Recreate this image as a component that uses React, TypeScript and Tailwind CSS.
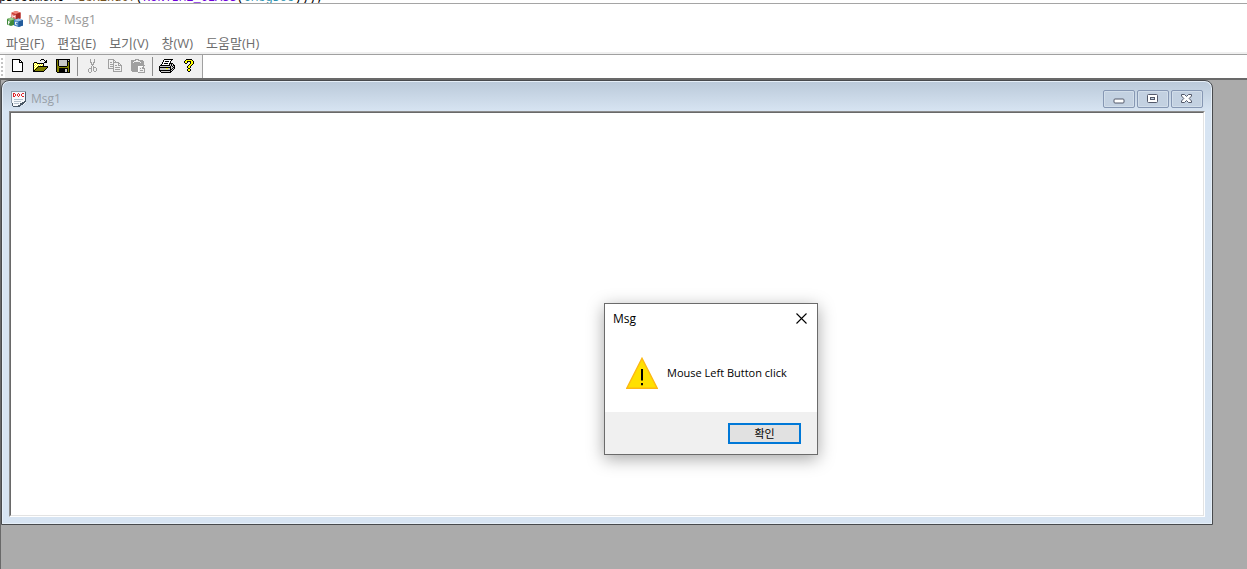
import type { ReactNode } from 'react';

const palette: Record<string, string> = {
  '#': '#000000',
  o: '#808000',
  y: '#ffff00',
  w: '#ffffff',
  g: '#a0a0a0',
  s: '#c8c8c8',
};

const newIcon = [
  '...########.....',
  '...#wwwwww##....',
  '...#wwwwww#w#...',
  '...#wwwwww####..',
  '...#wwwwwwwww#..',
  '...#wwwwwwwww#..',
  '...#wwwwwwwww#..',
  '...#wwwwwwwww#..',
  '...#wwwwwwwww#..',
  '...#wwwwwwwww#..',
  '...#wwwwwwwww#..',
  '...#wwwwwwwww#..',
  '...###########..',
];

const openIcon = [
  '.........###....',
  '........#...#.#.',
  '.............##.',
  '..###.......###.',
  '.#ywy#######....',
  '.#wywywywyw#....',
  '.#ywywywywy#....',
  '.#wywy##########',
  '.#ywy#ooooooooo#',
  '.#wy#ooooooooo#.',
  '.#y#ooooooooo#..',
  '.##ooooooooo#...',
  '.###########....',
];

const saveIcon = [
  '.##############.',
  '.#o#ssssssss#s#.',
  '.#o#ssssssss###.',
  '.#o#ssssssss#o#.',
  '.#o#ssssssss#o#.',
  '.#o#ssssssss#o#.',
  '.#o#ssssssss#o#.',
  '.#oo########oo#.',
  '.#oooooooooooo#.',
  '.#oo#########o#.',
  '.#oo######ss#o#.',
  '.#oo######ss#o#.',
  '.#oo######ss#o#.',
  '..#############.',
];

const cutIcon = [
  '......g...g.....',
  '......g...g.....',
  '......g...g.....',
  '......gg.gg.....',
  '.......g.g......',
  '.......ggg......',
  '........g.......',
  '.......g.g......',
  '.......g.ggg....',
  '.....ggg.g..g...',
  '....g..g.g..g...',
  '....g..g.g..g...',
  '....g..g..gg....',
  '.....gg.........',
];

const copyIcon = [
  '.gggggg.........',
  '.g....gg........',
  '.g....g.g.......',
  '.g.gg.gggggg....',
  '.g....g....gg...',
  '.g.gggg....g.g..',
  '.g....g.gg.gggg.',
  '.g.gggg.......g.',
  '.g....g.ggggg.g.',
  '.gggggg.......g.',
  '......g.ggggg.g.',
  '......g.......g.',
  '......ggggggggg.',
];

const pasteIcon = [
  '.....gggg.......',
  '.ggggg..ggggg...',
  '.ggg......gggg..',
  '.gg.gggggg.ggg..',
  '.ggggggggggggg..',
  '.ggggggggggggg..',
  '.gggggggggggggg.',
  '.gggggggwwwwwg..',
  '.gggggggw...gg..',
  '.gggggggw.g.ggg.',
  '.gggggggw.....g.',
  '.gggggggw.ggg.g.',
  '..ggggggw.....g.',
  '........ggggggg.',
];

const printIcon = [
  '.....#########..',
  '....#wwwwwww#...',
  '....#w####w#....',
  '...#wwwwwww#....',
  '...#w####w####..',
  '..#wwwwwww#s#s#.',
  '.##########s#s##',
  '#ssssssssss#s#s#',
  '############ss##',
  '#ssssssyyss#s#s#',
  '#ssssssssss##s#.',
  '############s#..',
  '.#sssssssss##...',
  '..##########....',
];

const helpIcon = [
  '....######......',
  '...#yyyyyy#.....',
  '..#yy####yy#....',
  '..#yy#..#yy#....',
  '...##...#yy#....',
  '.......#yy#.....',
  '......#yy#......',
  '.....#yy#.......',
  '.....#yy#.......',
  '......##........',
  '.....#yy#.......',
  '.....#yy#.......',
  '......##........',
];

function PixelIcon({ rows }: { rows: string[] }) {
  return (
    <svg width="16" height="14" viewBox="0 0 16 14" shapeRendering="crispEdges" aria-hidden="true">
      {rows.flatMap((row, y) =>
        row
          .split('')
          .map((c, x) =>
            palette[c] ? <rect key={`${x}-${y}`} x={x} y={y} width="1" height="1" fill={palette[c]} /> : null,
          ),
      )}
    </svg>
  );
}

function AppIcon() {
  return (
    <svg width="16" height="16" viewBox="0 0 16 16" aria-hidden="true">
      <path d="M4.500 1.500 9 0 13.500 1.500V7.500L9 9 4.500 7.500Z" fill="#cf3b35" />
      <path d="M4.500 1.500 9 0 13.500 1.500 9 3Z" fill="#ef8b80" />
      <path d="M9 3 13.500 1.500V7.500L9 9Z" fill="#a92925" />
      <path d="M0 8 4 6.500 8 8V13.500L4 15 0 13.500Z" fill="#3f8a3a" />
      <path d="M0 8 4 6.500 8 8 4 9.500Z" fill="#9bcb8a" />
      <path d="M7 9 11.500 7.500 16 9V14.500L11.500 16 7 14.500Z" fill="#3f7fc0" />
      <path d="M7 9 11.500 7.500 16 9 11.500 10.500Z" fill="#9cc6e8" />
      <path d="M11.500 10.500 16 9V14.500L11.500 16Z" fill="#245c9c" />
      <path
        d="M5.800 3.500v3.500M8 4v3.500M5.800 5.200 8 5.700M1.500 10v3.500M1.500 10H3.300M1.500 11.700H3M10.500 11.500 8.500 11v2.500l2 .5"
        stroke="#fff"
        strokeWidth="0.9"
        fill="none"
      />
    </svg>
  );
}

function DocIcon() {
  return (
    <svg width="16" height="16" viewBox="0 0 16 16" shapeRendering="crispEdges" aria-hidden="true">
      <path d="M1 1H15V11L12 14H10L9 15H2V13H1Z" fill="#f6f9fc" />
      <path d="M0 0H15V1H1V12H0Z" fill="#8f9cab" />
      <path d="M14 1V10H13V11H11V12H9V14H7V15H2V16H9V15H10V14H12V13H13V12H14V11H15V1ZM1 12H2V15H1Z" fill="#4a5866" />
      <path
        d="M2 2h2v1h1v2H4v1H2zM3 3v2h1V3zM7 2h1v1h1v2H8v1H7V5H6V3h1zM7 3v2h1V3zM11 2h2v1h-2zM10 3h1v2h-1zM11 5h2v1h-2z"
        fill="#e0252b"
        fillRule="evenodd"
      />
      <path d="M3 8h9v1H3zM3 10h7v1H3zM3 12h5v1H3z" fill="#b4c0cc" />
    </svg>
  );
}

const menus = ['파일(F)', '편집(E)', '보기(V)', '창(W)', '도움말(H)'];

const toolGroups = [
  [
    { label: '새로 만들기', rows: newIcon, disabled: false },
    { label: '열기', rows: openIcon, disabled: false },
    { label: '저장', rows: saveIcon, disabled: false },
  ],
  [
    { label: '잘라내기', rows: cutIcon, disabled: true },
    { label: '복사', rows: copyIcon, disabled: true },
    { label: '붙여넣기', rows: pasteIcon, disabled: true },
  ],
  [
    { label: '인쇄', rows: printIcon, disabled: false },
    { label: '정보', rows: helpIcon, disabled: false },
  ],
];

function Toolbar() {
  return (
    <div className="flex h-[23px] w-[203px] border-r border-[#a0a0a0] bg-[#f0f0f0]">
      <div className="flex w-[5px] flex-col justify-center gap-[2px] bg-white pl-px">
        {[0, 1, 2, 3, 4].map((i) => (
          <span key={i} className="size-[2px] bg-[#c4c4c4]" />
        ))}
      </div>
      {toolGroups.map((group, i) => (
        <div key={i} className="flex">
          {i > 0 && <span className="mx-[2px] my-[2px] w-[2px] border-r border-[#8c8c8c]" />}
          {group.map((tool) => (
            <button
              key={tool.label}
              type="button"
              aria-label={tool.label}
              disabled={tool.disabled}
              className="flex w-[23px] items-center justify-center pb-[2px]"
            >
              <PixelIcon rows={tool.rows} />
            </button>
          ))}
        </div>
      ))}
    </div>
  );
}

function CaptionButton({ label, children }: { label: string; children: ReactNode }) {
  return (
    <button
      type="button"
      aria-label={label}
      className="flex h-[18px] w-8 items-center justify-center rounded-xs border border-[#8697b3] bg-[#c3d1e1] inset-ring inset-ring-[#d2deea]"
    >
      <svg width="12" height="10" viewBox="0 0 12 10" aria-hidden="true">
        {children}
      </svg>
    </button>
  );
}

function ChildWindow() {
  return (
    <section className="mr-[34px] mb-[44px] flex flex-1 flex-col rounded-t-lg border border-[#484a4d] bg-[#d7e4f2] bg-linear-to-b from-[#bac9d9] to-[#d7e4f2] to-[30px] px-[7px] pb-[7px] inset-ring inset-ring-[#e6eff8]">
      <header className="flex h-[30px] items-center justify-between pt-[6px]">
        <div className="flex items-center gap-1 pl-[2px] text-[12px] text-[#98a0a8]">
          <DocIcon />
          <h2>Msg1</h2>
        </div>
        <div className="flex gap-[2px] pr-[2px]">
          <CaptionButton label="최소화">
            <rect x="1" y="5" width="10" height="4" rx="1" fill="#fff" stroke="#53596a" />
          </CaptionButton>
          <CaptionButton label="최대화">
            <rect x="0.5" y="0.5" width="10" height="8" rx="1" fill="#fff" stroke="#53596a" />
            <rect x="3.500" y="3.500" width="4" height="2" fill="#c3d1e1" stroke="#53596a" />
          </CaptionButton>
          <CaptionButton label="닫기">
            <path
              d="M0.500 0.500H3.500L5.500 2.500 7.500 0.500H10.500V2L8.200 4.500 10.500 7V8.500H7.500L5.500 6.500 3.500 8.500H0.500V7L2.800 4.500 0.500 2Z"
              fill="#fff"
              stroke="#53596a"
            />
          </CaptionButton>
        </div>
      </header>
      <div className="flex flex-1 border border-t-[#8c8c8c] border-r-white border-b-white border-l-[#8c8c8c]">
        <div className="flex-1 border border-t-[#696969] border-r-[#e3e3e3] border-b-[#e3e3e3] border-l-[#696969] bg-white" />
      </div>
    </section>
  );
}

function MessageBox() {
  return (
    <div
      role="alertdialog"
      aria-labelledby="msg-title"
      aria-describedby="msg-text"
      className="absolute top-[303px] left-[604px] flex w-[214px] flex-col border border-[#6b6b6b] bg-white text-black shadow-[0_4px_16px_rgba(0,0,0,0.35)]"
    >
      <header className="flex h-[29px] items-center justify-between pr-[10px] pl-2">
        <h2 id="msg-title" className="text-[12px]">
          Msg
        </h2>
        <button type="button" aria-label="닫기">
          <svg width="11" height="11" viewBox="0 0 11 11" aria-hidden="true">
            <path d="M0.500 0.500 10.500 10.500M10.500 0.500 0.500 10.500" stroke="#000" strokeWidth="1.100" />
          </svg>
        </button>
      </header>
      <div className="flex h-[79px] items-center gap-[9px] pl-[21px]">
        <svg width="32" height="32" viewBox="0 0 32 32" aria-hidden="true">
          <path d="M16 1.300 31.200 31.300H0.800Z" fill="#ffe000" stroke="#fdb813" strokeWidth="1.400" />
          <path d="M15 12h2v11.500h-2zM15 26h2v2.300h-2z" fill="#000" />
        </svg>
        <p id="msg-text" className="text-[11px] whitespace-nowrap">
          Mouse Left Button click
        </p>
      </div>
      <footer className="flex justify-end bg-[#f0f0f0] pt-[11px] pr-4 pb-[10px]">
        <button
          type="button"
          className="h-[21px] w-[73px] border-2 border-[#0078d7] bg-[#e1e1e1] text-[11px] leading-none"
        >
          확인
        </button>
      </footer>
    </div>
  );
}

export default function App() {
  return (
    <div className="relative flex h-screen flex-col overflow-hidden bg-white font-['Open_Sans','Noto_Sans_CJK_KR',sans-serif] text-[12px] leading-4">
      {/* Editor line behind the frame */}
      <div className="flex h-[3px] shrink-0 items-end overflow-hidden bg-white">
        <code className="-ml-px font-['Liberation_Mono',monospace] text-[12px] leading-[10px] whitespace-pre text-black">
          {'pDocument->'}
          <span className="text-[#74531f]">IsKindOf</span>(<span className="text-[#6f00da]">RUNTIME_CLASS</span>(
          <span className="text-[#2b91af]">CMsgDoc</span>)));
        </code>
      </div>

      <header className="border-t border-[#a5a5a5]">
        <div className="flex h-[29px] items-center gap-[5px] pl-[7px] text-[13px] text-[#999999]">
          <AppIcon />
          <h1>Msg - Msg1</h1>
        </div>
        <nav className="flex h-[19px] items-center gap-[13px] pl-[6px] text-[13px] text-[#6d6d6d]">
          {menus.map((menu) => (
            <button key={menu} type="button" className="whitespace-nowrap">
              {menu}
            </button>
          ))}
        </nav>
        <div className="h-[3px] border-b border-[#a0a0a0] bg-[#f0f0f0]" />
      </header>
      <Toolbar />

      <main className="flex flex-1 flex-col border-t-2 border-l border-[#696969] bg-[#ababab]">
        <ChildWindow />
      </main>

      <MessageBox />
    </div>
  );
}
